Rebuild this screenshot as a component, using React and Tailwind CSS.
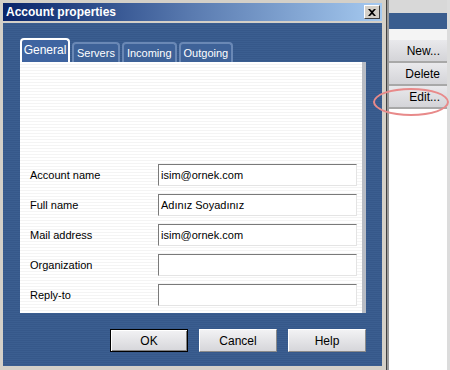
import React from 'react';

const font = { fontFamily: '"Liberation Sans", Arial, sans-serif' };

const fields = [
  { label: 'Account name', value: 'isim@ornek.com' },
  { label: 'Full name', value: 'Adınız Soyadınız' },
  { label: 'Mail address', value: 'isim@ornek.com' },
  { label: 'Organization', value: '' },
  { label: 'Reply-to', value: '' },
];

const tabs = ['Servers', 'Incoming', 'Outgoing'];

const DialogButton = ({ children, primary }) => (
  <button
    className={
      'w-[78px] h-[23px] text-[12px] text-black bg-gradient-to-b from-[#f2f2f4] to-[#d6d6da] border ' +
      (primary
        ? 'border-black shadow-[inset_1px_1px_0_#fff,inset_-1px_-1px_0_#808080]'
        : 'border-t-white border-l-white border-r-[#8a8a8a] border-b-[#8a8a8a]')
    }
  >
    {children}
  </button>
);

const SideButton = ({ children }) => (
  <div className="h-[23px] flex items-center justify-end pr-[7px] text-[12px] text-black bg-gradient-to-b from-[#e9e9ec] to-[#d4d4d8] border-b-2 border-[#a8a8a8]">
    {children}
  </div>
);

export default function App() {
  return (
    <div className="relative w-[450px] h-[370px] flex bg-white overflow-hidden" style={font}>
      {/* dialog window */}
      <div className="w-[387px] h-full flex flex-col bg-[#d4d0c8] pl-[3px] pt-[3px] pb-[4px] pr-[4px] border-r border-[#404040]">
        <div className="h-[18px] flex items-center justify-between bg-gradient-to-r from-[#0a246a] via-[#5a7bb0] to-[#a6caf0] pl-[3px] pr-[2px]">
          <span className="text-white font-bold text-[12px]">Account properties</span>
          <div className="w-[16px] h-[14px] bg-[#d4d0c8] border border-t-white border-l-white border-r-[#404040] border-b-[#404040] flex items-center justify-center">
            <svg width="8" height="7" viewBox="0 0 8 7">
              <path d="M0 0h2l2 2 2-2h2L5 3.5 8 7H6L4 5 2 7H0l3-3.5z" fill="#000" />
            </svg>
          </div>
        </div>
        <div className="flex-1 mt-[2px] flex flex-col pl-[17px] pt-[15px] bg-[repeating-linear-gradient(0deg,#3b5e90_0px,#3b5e90_1px,#36588a_1px,#36588a_2px)]">
          {/* tabs */}
          <div className="flex items-end gap-[2px] h-[24px]">
            <div className="w-[50px] h-[24px] rounded-t-[4px] border-2 border-b-0 border-white bg-[#3f64a0] text-white text-[12px] flex items-center justify-center pb-[2px]">
              General
            </div>
            {tabs.map((t) => (
              <div
                key={t}
                className="h-[20px] px-[3px] rounded-t-[4px] border-2 border-b-0 border-[#6a88b5] bg-[#3e6298] text-white text-[11px] flex items-center"
              >
                {t}
              </div>
            ))}
          </div>
          {/* panel */}
          <div className="w-[342px] h-[251px] flex flex-col pl-[10px] pt-[102px] gap-[8px] bg-[repeating-linear-gradient(0deg,#ffffff_0px,#ffffff_2px,#f4f4f4_2px,#f4f4f4_3px)] shadow-[4px_0_0_#b8bcc4]">
            {fields.map((f) => (
              <div key={f.label} className="flex items-center h-[22px]">
                <span className="w-[128px] text-[11px] text-black">{f.label}</span>
                <div className="w-[199px] h-[22px] bg-white border border-t-[#7a7a7a] border-l-[#7a7a7a] border-r-[#e4e4e4] border-b-[#e4e4e4] flex items-center pl-[2px] text-[11px] text-black">
                  {f.value}
                </div>
              </div>
            ))}
          </div>
          {/* buttons */}
          <div className="flex gap-[11px] pl-[90px] mt-[16px]">
            <DialogButton primary>OK</DialogButton>
            <DialogButton>Cancel</DialogButton>
            <DialogButton>Help</DialogButton>
          </div>
        </div>
      </div>
      {/* background list panel */}
      <div className="flex-1 flex flex-col border-l-2 border-[#9a9a9a] pr-[3px] bg-white">
        <div className="h-[13px] bg-[#d8d8d8]" />
        <div className="h-[16px] bg-[#3a5d8f]" />
        <div className="h-[11px] bg-[#f4f4f4]" />
        <SideButton>New...</SideButton>
        <SideButton>Delete</SideButton>
        <SideButton>Edit...</SideButton>
        <div className="flex-1 bg-white" />
      </div>
      <div className="absolute right-0 top-0 w-[3px] h-full bg-[#dcdcdc]" />
      {/* highlight ring */}
      <div className="absolute left-[373px] top-[88px] w-[76px] h-[28px] rounded-[50%] border-2 border-[#e88a8a]" />
    </div>
  );
}
